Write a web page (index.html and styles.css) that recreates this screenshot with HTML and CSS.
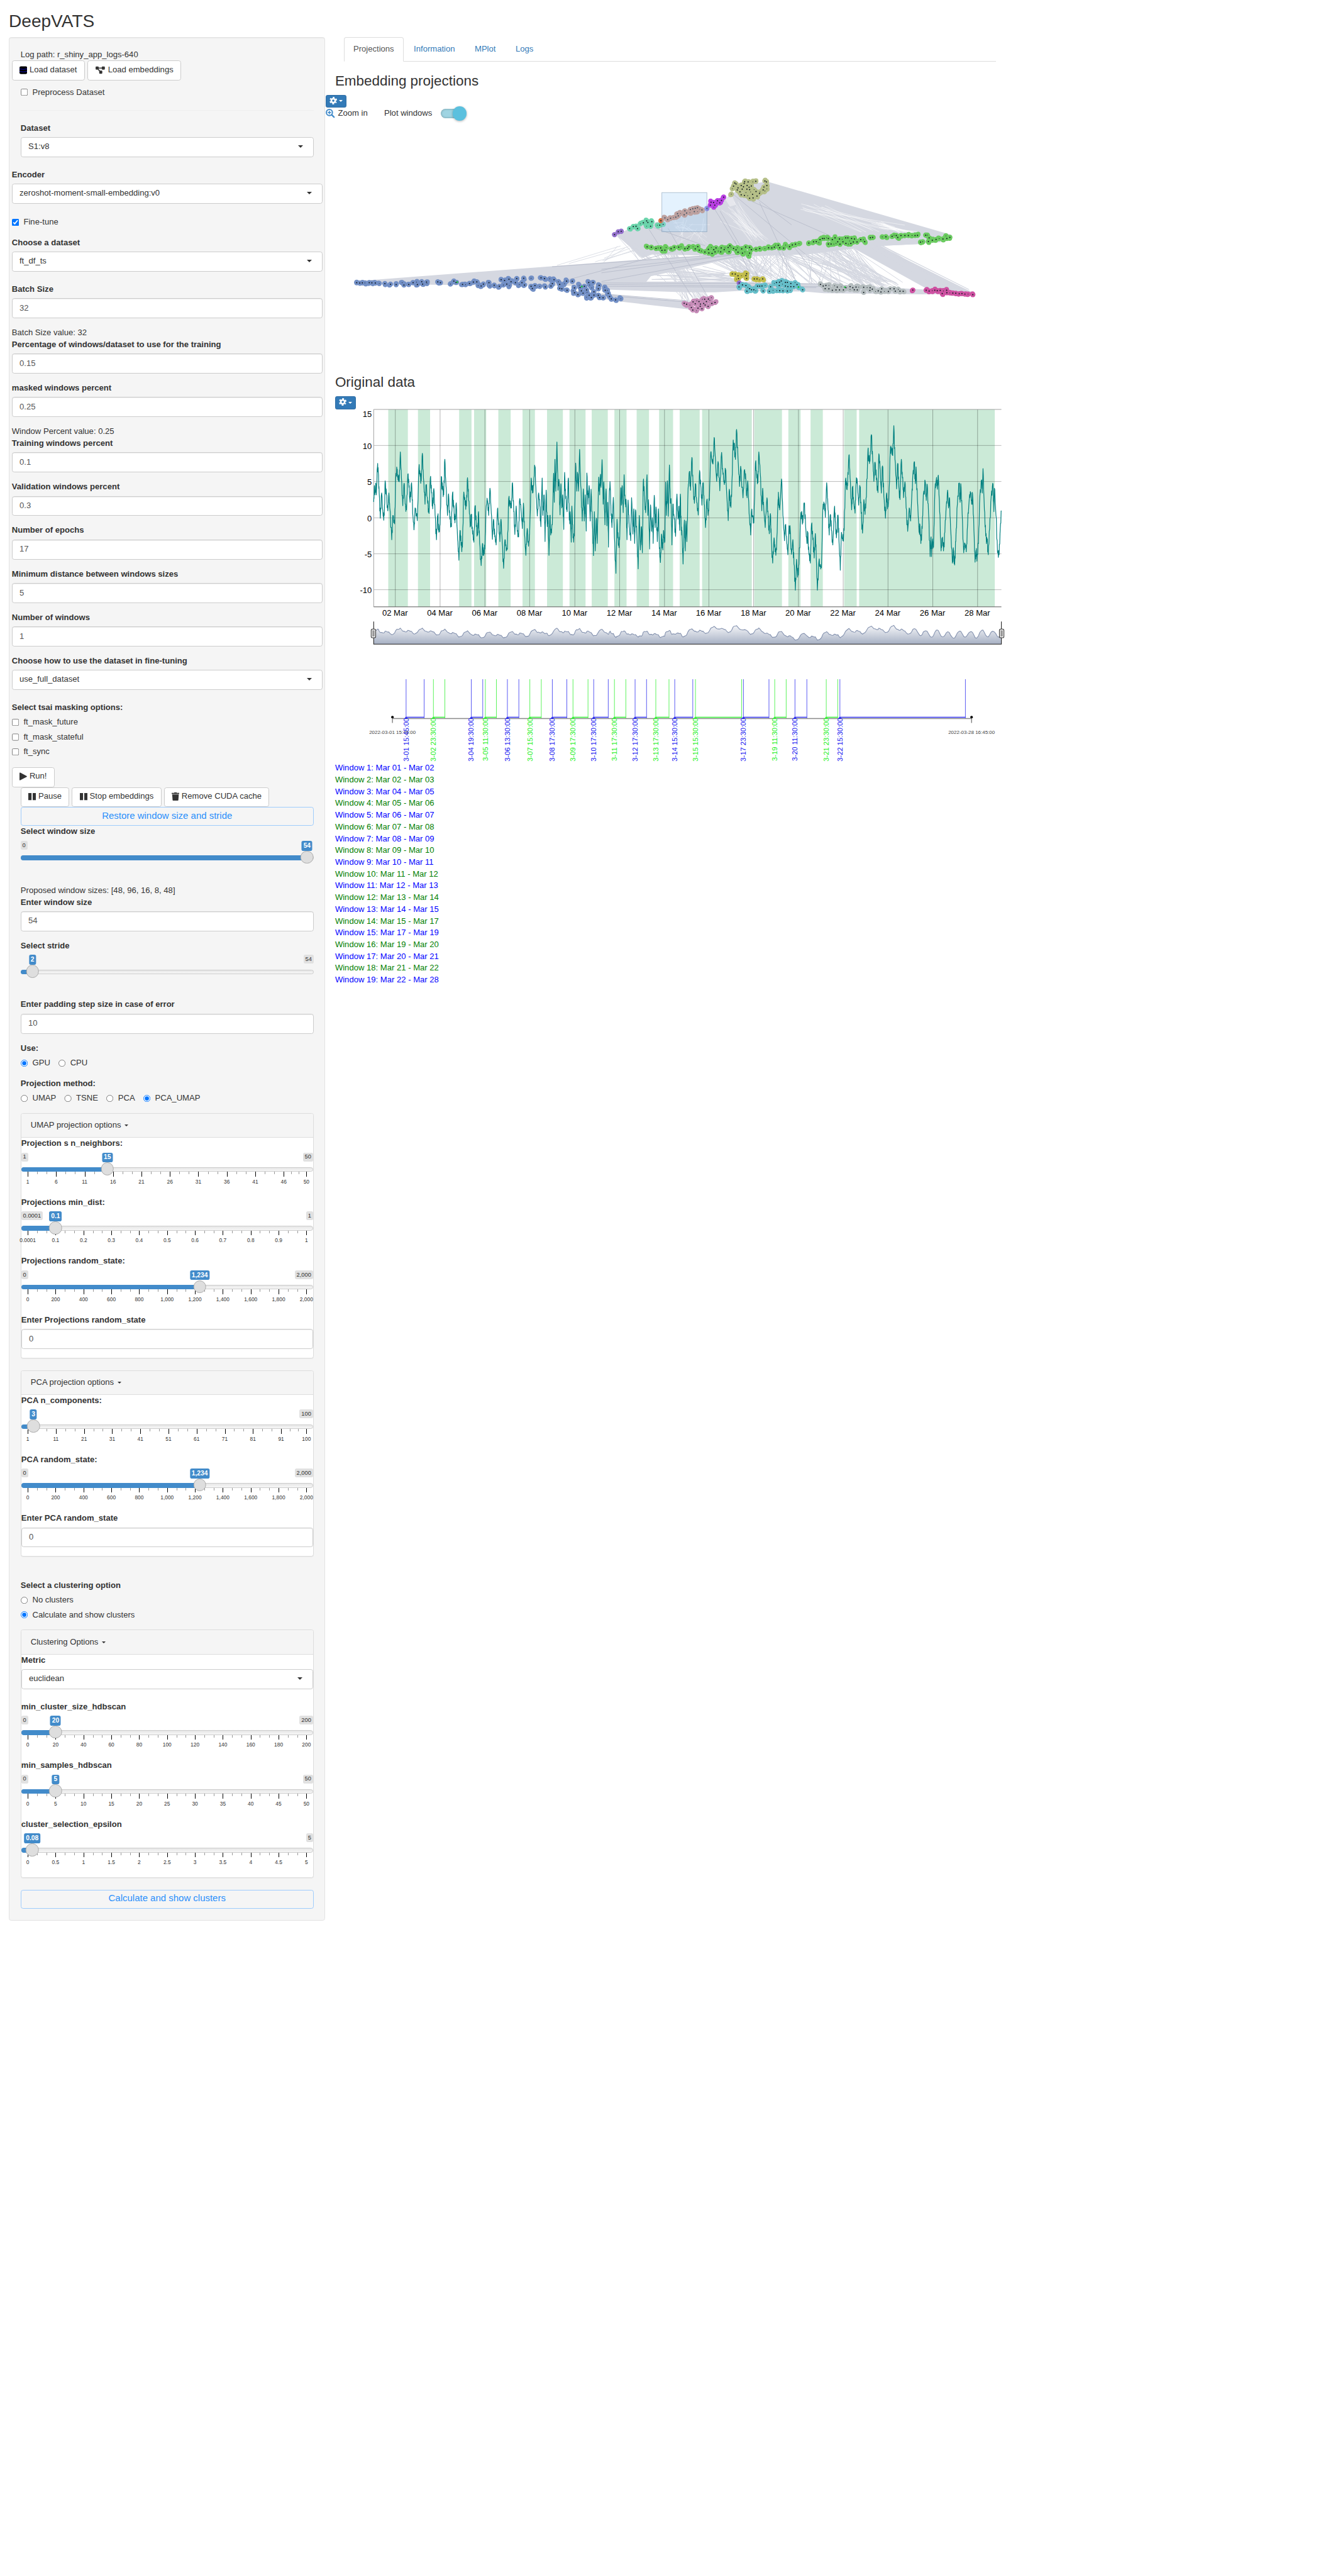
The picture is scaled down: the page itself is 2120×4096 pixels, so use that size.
FILE: index.html
```html
<!DOCTYPE html>
<html lang="en">
<head>
<meta charset="utf-8">
<title>DeepVATS</title>
<link rel="stylesheet" href="styles.css">
</head>
<body>
<h2>DeepVATS</h2>
<div class="layout">
<form class="well">
  <div class="line">Log path: r_shiny_app_logs-640</div>
  <div class="row btns">
    <button type="button" class="btn"><svg class="i13" viewBox="0 0 14 14"><rect y="0" width="14" height="14" rx="2.5" fill="#000"/><path d="M0 4.6q7 2 14 0M0 9.2q7 2 14 0" stroke="#1010e0" stroke-width=".9" fill="none"/></svg>Load dataset</button>
    <button type="button" class="btn"><svg class="i18" viewBox="0 0 576 512"><path fill="#333" d="M0 80C0 53.500 21.500 32 48 32l96 0c26.500 0 48 21.500 48 48l0 16 192 0 0-16c0-26.500 21.500-48 48-48l96 0c26.500 0 48 21.500 48 48l0 96c0 26.500-21.500 48-48 48l-96 0c-26.500 0-48-21.500-48-48l0-16-192 0 0 16c0 1.700-.1 3.400-.3 5L272 288l96 0c26.500 0 48 21.500 48 48l0 96c0 26.500-21.500 48-48 48l-96 0c-26.500 0-48-21.500-48-48l0-96c0-1.700 .1-3.400 .3-5L144 224l-96 0c-26.500 0-48-21.500-48-48L0 80z"/></svg>Load embeddings</button>
  </div>
  <label class="check pre"><input type="checkbox">Preprocess Dataset</label>
  <hr>
  <div class="group sel"><b>Dataset</b><div class="select">S1:v8</div></div>
  <div class="row">
    <div class="group sel"><b>Encoder</b><div class="select">zeroshot-moment-small-embedding:v0</div></div>
    <label class="check fine"><input type="checkbox" checked>Fine-tune</label>
    <div class="group sel"><b>Choose a dataset</b><div class="select">ft_df_ts</div></div>
    <div class="group"><b>Batch Size</b><input class="control" value="32"></div>
    <div class="line">Batch Size value: 32</div>
    <div class="group"><b>Percentage of windows/dataset to use for the training</b><input class="control" value="0.15"></div>
    <div class="group"><b>masked windows percent</b><input class="control" value="0.25"></div>
    <div class="line">Window Percent value: 0.25</div>
    <div class="group"><b>Training windows percent</b><input class="control" value="0.1"></div>
    <div class="group"><b>Validation windows percent</b><input class="control" value="0.3"></div>
    <div class="group"><b>Number of epochs</b><input class="control" value="17"></div>
    <div class="group"><b>Minimum distance between windows sizes</b><input class="control" value="5"></div>
    <div class="group"><b>Number of windows</b><input class="control" value="1"></div>
    <div class="group sel"><b>Choose how to use the dataset in fine-tuning</b><div class="select">use_full_dataset</div></div>
    <div class="group masks"><b>Select tsai masking options:</b>
      <label class="check"><input type="checkbox">ft_mask_future</label>
      <label class="check"><input type="checkbox">ft_mask_stateful</label>
      <label class="check"><input type="checkbox">ft_sync</label>
    </div>
    <div class="btns"><button type="button" class="btn"><svg class="i13" viewBox="0 0 13 14"><path d="M0 1.500Q0 0 1.400 .6L12.300 6.300Q13.200 7 12.300 7.700L1.400 13.400Q0 14 0 12.500z" fill="#333"/></svg>Run!</button></div>
  </div>
  <div class="btns">
    <button type="button" class="btn"><svg class="i13" viewBox="0 0 13 14"><path d="M0 1h5.500v12H0zM7.500 1H13v12H7.500z" fill="#333"/></svg>Pause</button>
    <button type="button" class="btn"><svg class="i13" viewBox="0 0 13 14"><path d="M0 1h5.500v12H0zM7.500 1H13v12H7.500z" fill="#333"/></svg>Stop embeddings</button>
    <button type="button" class="btn"><svg class="i13" viewBox="0 0 13 14"><path d="M0 .9h4L4.600 0h3.800L9 .9h4v1.700H0zM.9 3.500h11.200l-.7 9.300q-.1 1.200-1.300 1.200H2.900q-1.200 0-1.300-1.200z" fill="#333"/></svg>Remove CUDA cache</button>
  </div>
  <button type="button" class="btn-outline">Restore window size and stride</button>
  <div class="group"><b>Select window size</b><div class="irs" data-min="0" data-value="54" data-pos="1"></div></div>
  <div class="line after-slider">Proposed window sizes: [48, 96, 16, 8, 48]</div>
  <div class="group"><b>Enter window size</b><input class="control" value="54"></div>
  <div class="group"><b>Select stride</b><div class="irs" data-max="54" data-value="2" data-pos="0.0189"></div></div>
  <div class="group after-slider"><b>Enter padding step size in case of error</b><input class="control" value="10"></div>
  <div class="group"><b>Use:</b><div class="inline">
    <label class="check"><input type="radio" name="use" checked>GPU</label>
    <label class="check"><input type="radio" name="use">CPU</label></div></div>
  <div class="group"><b>Projection method:</b><div class="inline">
    <label class="check"><input type="radio" name="pm">UMAP</label>
    <label class="check"><input type="radio" name="pm">TSNE</label>
    <label class="check"><input type="radio" name="pm">PCA</label>
    <label class="check"><input type="radio" name="pm" checked>PCA_UMAP</label></div></div>
  <div class="panel">
    <div class="head">UMAP projection options <i class="caret"></i></div>
    <div class="group"><b>Projection s n_neighbors:</b><div class="irs" data-min="1" data-max="50" data-value="15" data-pos="0.2857" data-step="0.10204" data-grid="1 6 11 16 21 26 31 36 41 46 50"></div></div>
    <div class="group"><b>Projections min_dist:</b><div class="irs" data-min="0.0001" data-max="1" data-value="0.1" data-pos="0.1" data-step="0.1" data-grid="0.0001 0.1 0.2 0.3 0.4 0.5 0.6 0.7 0.8 0.9 1"></div></div>
    <div class="group"><b>Projections random_state:</b><div class="irs" data-min="0" data-max="2,000" data-value="1,234" data-pos="0.617" data-step="0.1" data-grid="0 200 400 600 800 1,000 1,200 1,400 1,600 1,800 2,000"></div></div>
    <div class="group"><b>Enter Projections random_state</b><input class="control" value="0"></div>
  </div>
  <div class="panel">
    <div class="head">PCA projection options <i class="caret"></i></div>
    <div class="group"><b>PCA n_components:</b><div class="irs" data-max="100" data-value="3" data-pos="0.0202" data-step="0.10101" data-grid="1 11 21 31 41 51 61 71 81 91 100"></div></div>
    <div class="group"><b>PCA random_state:</b><div class="irs" data-min="0" data-max="2,000" data-value="1,234" data-pos="0.617" data-step="0.1" data-grid="0 200 400 600 800 1,000 1,200 1,400 1,600 1,800 2,000"></div></div>
    <div class="group"><b>Enter PCA random_state</b><input class="control" value="0"></div>
  </div>
  <div class="group cluster"><b>Select a clustering option</b>
    <label class="check"><input type="radio" name="cl">No clusters</label>
    <label class="check"><input type="radio" name="cl" checked>Calculate and show clusters</label>
  </div>
  <div class="panel">
    <div class="head">Clustering Options <i class="caret"></i></div>
    <div class="group sel"><b>Metric</b><div class="select">euclidean</div></div>
    <div class="group"><b>min_cluster_size_hdbscan</b><div class="irs" data-min="0" data-max="200" data-value="20" data-pos="0.1" data-step="0.1" data-grid="0 20 40 60 80 100 120 140 160 180 200"></div></div>
    <div class="group"><b>min_samples_hdbscan</b><div class="irs" data-min="0" data-max="50" data-value="5" data-pos="0.1" data-step="0.1" data-grid="0 5 10 15 20 25 30 35 40 45 50"></div></div>
    <div class="group"><b>cluster_selection_epsilon</b><div class="irs" data-max="5" data-value="0.08" data-pos="0.016" data-step="0.1" data-grid="0 0.5 1 1.5 2 2.5 3 3.5 4 4.5 5"></div></div>
  </div>
  <button type="button" class="btn-outline">Calculate and show clusters</button>
</form>
<main>
  <nav class="tabs"><a class="active">Projections</a><a>Information</a><a>MPlot</a><a>Logs</a></nav>
  <h3>Embedding projections</h3>
  <div class="pull">
    <button type="button" class="gear"><svg viewBox="0 0 14 14"><circle cx="7" cy="7" r="3.600" fill="none" stroke="#fff" stroke-width="3"/><circle cx="7" cy="7" r="5.900" fill="none" stroke="#fff" stroke-width="2.200" stroke-dasharray="3.090 3.090" stroke-dashoffset="1.545" transform="rotate(30 7 7)"/></svg><i class="caret"></i></button>
    <div class="tools">
      <svg class="mag" viewBox="0 0 16 16"><circle cx="6.500" cy="6.500" r="5.300" fill="none" stroke="#428bca" stroke-width="2.200"/><path d="M10.600 10.600L14.600 14.600" stroke="#428bca" stroke-width="2.600" stroke-linecap="round"/><path d="M6.500 3.700v5.600M3.700 6.500h5.600" stroke="#428bca" stroke-width="1.700"/></svg>
      <span class="zin">Zoom in</span><span class="pw">Plot windows</span><span class="switch"></span>
    </div>
  </div>
  <svg class="scatter" id="scatter" viewBox="641 320 1290 300"></svg>
  <h3 class="second">Original data</h3>
  <button type="button" class="gear"><svg viewBox="0 0 14 14"><circle cx="7" cy="7" r="3.600" fill="none" stroke="#fff" stroke-width="3"/><circle cx="7" cy="7" r="5.900" fill="none" stroke="#fff" stroke-width="2.200" stroke-dasharray="3.090 3.090" stroke-dashoffset="1.545" transform="rotate(30 7 7)"/></svg><i class="caret"></i></button>
  <svg class="series" id="series" viewBox="641 782 1290 460"></svg>
  <svg class="timeline" id="timeline" viewBox="641 1290 1290 168"></svg>
  <div class="windows" id="windows"></div>
</main>
</div>
<script src="app.js"></script>
</body>
</html>
```
FILE: styles.css
```css
* { box-sizing: border-box; }
html { overflow-x: hidden; }
body { margin: 0; zoom: .9357; font: 14px/20px "Liberation Sans", Arial, sans-serif; color: #333; background: #fff; }
h2 { font-size: 30px; line-height: 33px; margin: 0; padding: 20px 0 10px 15px; font-weight: 400; }
h3 { font-size: 24px; line-height: 26px; font-weight: 400; margin: 20px 0 10px; }
.layout { display: flex; align-items: flex-start; }
.well { width: 538px; margin-left: 15px; padding: 19px; background: #f5f5f5; border: 1px solid #e3e3e3; border-radius: 4px; box-shadow: inset 0 1px 1px rgba(0,0,0,.05); flex: none; }
.row { margin: 0 -15px; }
.line { height: 20px; }
.btns { display: flex; gap: 4.500px; }
.btn { height: 34px; padding: 0 12px; border: 1px solid #ccc; border-radius: 4px; background: #fff; font: inherit; color: #333; display: flex; align-items: center; white-space: nowrap; padding-bottom: 2px; }
.btn svg { margin-right: 4px; height: 14px; flex: none; }
.i13 { width: 13px; }
.i18 { width: 18px; }
.btn-outline { display: block; width: 100%; height: 32px; border: 1px solid #9fccfc; border-radius: 4px; background: #f5f5f5; color: #2a8ffb; font: 16px/20px "Liberation Sans", Arial, sans-serif; padding: 0 0 3px; }
.check { display: flex; height: 20px; margin-bottom: 5px; }
.check input { width: 13px; height: 13px; margin: 4px 7px 0 0; flex: none; }
.pre { margin: 10px 0 20px; }
.fine { margin: 22px 0 15px; }
hr { border: 0; border-top: 1px solid #eee; margin: 0 0 20px; }
.group { margin-bottom: 15px; }
.group > b { display: block; height: 20px; margin-bottom: 5px; }
.sel { margin-bottom: 20px; }
.control, .select { display: block; width: 100%; height: 34px; border: 1px solid #ccc; border-radius: 4px; background: #fff; padding: 5px 12px 7px; font: inherit; line-height: 20px; }
.control { color: #555; box-shadow: inset 0 1px 1px rgba(0,0,0,.075); }
.select { display: flex; justify-content: space-between; align-items: center; padding-right: 17px; }
.select::after { content: ""; border: 5px solid transparent; border-top-color: #333; border-bottom: 0; }
.masks { margin-bottom: 16px; }
.inline { display: flex; gap: 14px; }
.inline .check { margin: 0; }
.after-slider { margin-top: 35px; }
.panel { border: 1px solid #ddd; border-radius: 4px; background: #fff; margin-bottom: 20px; box-shadow: 0 1px 1px rgba(0,0,0,.05); display: flow-root; }
.head { height: 41px; padding: 10px 16px; border-bottom: 1px solid #ddd; background: #f5f5f5; border-radius: 3px 3px 0 0; }
.caret { display: inline-block; border: 4px solid transparent; border-top-color: currentColor; border-bottom: 0; vertical-align: middle; margin-left: 2px; }
.cluster { margin-top: 39px; }
.cluster .check:last-child { margin: 0; }

/* range sliders */
.irs { position: relative; height: 40px; font-size: 10px; line-height: 13px; }
.irs.grid { height: 60px; }
.irs-min, .irs-max { position: absolute; top: 0; padding: 1px 3px; background: #e1e1e1; border-radius: 3px; color: #333; }
.irs-min { left: 0; }
.irs-max { right: 0; }
.irs-single { position: absolute; top: 0; padding: 1px 3px; background: #428bca; border-radius: 3px; color: #fff; font-size: 11px; line-height: 15px; font-weight: 700; transform: translateX(-50%); }
.irs-line { position: absolute; top: 25px; left: 0; right: 0; height: 8px; border: 1px solid #ccc; border-radius: 8px; background: linear-gradient(#dedede -50%, #fff 150%); }
.irs-bar { position: absolute; top: 25px; left: 0; height: 8px; background: #428bca; border-radius: 8px 0 0 8px; }
.irs-handle { position: absolute; top: 17px; width: 22px; height: 22px; border: 1px solid #ababab; border-radius: 50%; background: #dedede; transform: translateX(-50%); }
.irs-tick { position: absolute; top: 33px; width: 1px; height: 8px; background: #000; }
.irs-tick.small { height: 4px; background: #999; }
.irs-text { position: absolute; top: 43px; font-size: 9px; transform: translateX(-50%); }

main { width: 1148px; margin-left: 16.500px; }
.tabs { display: flex; margin-left: 15px; width: 1108px; border-bottom: 1px solid #ddd; height: 42px; }
.tabs a { height: 42px; padding: 10px 15px; border: 1px solid transparent; color: #337ab7; margin-right: 1.500px; line-height: 19px; }
.tabs .active { color: #555; border-color: #ddd #ddd #fff; border-radius: 4px 4px 0 0; background: #fff; }
.gear { display: flex; align-items: center; justify-content: center; gap: 3px; width: 35px; height: 22px; padding: 0; border: 1px solid #2e6da4; border-radius: 3px; background: #337ab7; color: #fff; }
.gear svg { width: 13px; height: 13px; margin-top: -2px; }
.gear .caret { margin: 0; }
.pull { margin-left: -15.500px; height: 123.600px; }
.tools { display: flex; align-items: center; height: 20px; }
.mag { width: 15.500px; height: 15.500px; margin-right: 5px; }
.zin { width: 78.500px; }
.pw { width: 96px; }
.switch { position: relative; width: 40px; height: 16px; border-radius: 9px; background: #9fd4e2; box-shadow: inset 0 0 4px rgba(0,0,0,.3); }
.switch::after { content: ""; position: absolute; left: 20px; top: -4px; width: 24px; height: 24px; border-radius: 50%; background: #5bc0de; box-shadow: 0 1px 4px rgba(0,0,0,.3); }
.scatter, .series, .timeline { display: block; width: 1147.200px; overflow: hidden; }
.scatter { height: 266.800px; }
.second { margin-top: 86px; }
.series { height: 409.100px; margin-top: -.5px; }
.timeline { height: 149.400px; margin-top: 42.200px; }
.windows { color: blue; white-space: pre; }
.windows div:nth-child(even) { color: green; }
svg text { font-family: "Liberation Sans", Arial, sans-serif; }
```
FILE: app.js
```js
// ---------- helpers ----------
let seed = 7;
const rnd = () => (seed = (seed * 16807) % 2147483647) / 2147483647;
const pairs = s => s.trim().split(/\s+/).map(p => p.split(',').map(Number));
const tile = (ox, oy, kx, ky) => ([x, y]) => [ox + x / kx, oy + y / ky];
const wide = tile(620, 40, 1.2062, 2.7034);
const near = tile(1150, 320, 2.1189, 3);
const f = n => n.toFixed(1);

// ---------- range sliders ----------
document.querySelectorAll('.irs').forEach(el => {
  const d = el.dataset;
  const at = p => `calc(11px + (100% - 22px) * ${p})`;
  let h = '<span class="irs-line"></span>';
  h += `<span class="irs-bar" style="width:${at(d.pos)}"></span>`;
  if (d.grid) {
    el.classList.add('grid');
    const g = d.grid.split(' ');
    g.forEach((t, i) => {
      const p = Math.min(1, i * d.step), q = Math.min(1, (i + 1) * d.step);
      h += `<span class="irs-tick" style="left:${at(p)}"></span><span class="irs-text" style="left:${at(p)}">${t}</span>`;
      if (i < g.length - 1) for (const k of [1, 2]) h += `<span class="irs-tick small" style="left:${at(p + (q - p) * k / 3)}"></span>`;
    });
  }
  h += `<span class="irs-handle" style="left:${at(d.pos)}"></span>`;
  if (d.min) h += `<span class="irs-min">${d.min}</span>`;
  if (d.max) h += `<span class="irs-max">${d.max}</span>`;
  h += `<span class="irs-single" style="left:${at(d.pos)}">${d.value}</span>`;
  el.innerHTML = h;
});

// ---------- embedding scatter ----------
const C = {
  purple: ['#926fcb', '53,386 68,370 80,367'],
  teal: ['#6bd4ab', '114,352 129,340 146,352 157,324 170,318 188,316 204,312 183,338 199,338 140,338 183,307 226,332 236,332 250,327'],
  orange: ['#c98f7c', '257,290 268,300 280,292 292,288 301,286 311,278 308,266 320,265 335,272 338,250 345,262 358,260 360,242 370,238 376,254 389,254 380,235 389,232 407,244 398,240'],
  dot: ['#8b83e0', '427,236'],
  magenta: ['#b93fe2', '441,217 454,202 459,217 467,206 479,204 486,190 495,171 455,228 470,192 444,200'],
  olive: ['#b5bf88', '545,95 540,90 566,104 530,123 553,118 570,125 594,84 613,83 607,107 598,114 589,125 604,141 561,141 566,158 579,161 592,163 600,178 614,176 626,139 642,141 655,130 658,113 670,104 670,124 668,84 662,78 640,150 526,154 578,92 580,82 625,80 662,136 630,165 535,108 550,130 585,145 612,155 590,104 575,112 618,128 600,128'],
  green: ['#6bcb60', '185,456 202,458 221,465 230,462 240,462 245,476 257,475 262,460 282,467 295,459 313,458 322,455 338,467 349,465 354,456 371,455 380,468 390,455 396,475 405,480 419,486 435,491 448,494 445,460 433,470 455,472 464,462 473,480 460,485 485,462 483,485 500,462 497,472 513,460 517,484 525,458 520,450 535,465 545,473 551,461 553,487 568,468 571,492 581,485 584,457 600,460 607,472 595,505 600,492 626,470 641,466 662,466 677,461 690,462 700,458 705,447 716,447 722,461 738,463 746,446 762,455 773,445 786,441 800,438 840,434 859,427 870,426 880,432 885,415 895,408 902,408 912,404 919,408 919,440 930,440 941,440 935,415 946,405 957,427 950,436 964,411 966,441 978,427 975,412 989,405 998,405 990,436 1000,440 1010,436 1013,408 1025,411 1005,422 1020,428 1035,428 1050,415 1061,415 1066,426 1089,404 1098,402 1137,399 1152,398 1177,396 1194,391 1185,389 1213,391 1229,391 1243,391 1258,391 1280,390 1270,391 1200,402 1320,389 1327,405 1313,389 1292,429 1301,427 1324,425 1340,418 1355,414 1368,409 1383,411 1399,408 1411,402 1395,393'],
  yellow: ['#c2bd4c', '530,611 542,612 553,622 567,622 585,621 588,637 555,638 547,641 588,610 619,640 630,640 640,645 653,640'],
  violet: ['#926fcb', '558,663'],
  cyan: ['#66bec9', '557,686 571,674 585,678 593,688 608,702 589,710 617,702 625,708 632,681 650,680 641,681 663,677 655,709 680,711 685,685 695,705 709,661 721,659 728,652 733,670 745,660 753,660 767,666 784,661 767,684 779,684 755,684 710,707 735,708 722,707 753,709 765,706 815,702 798,686 792,672 700,666 600,696 745,680 720,678'],
  grey: ['#b5bdbf', '887,671 898,680 909,677 921,677 906,696 921,697 935,705 944,679 950,703 955,687 964,703 971,685 980,703 990,690 1007,684 1007,700 1024,702 1018,690 1031,687 1042,687 1036,703 1062,688 1062,717 1076,689 1088,690 1087,706 1097,698 1110,711 1121,708 1132,715 1135,697 1146,711 1162,712 1169,697 1185,697 1202,700 1190,710 1209,710 1222,711'],
  pink: ['#ce52a2', '1261,704 1315,705 1327,709 1340,707 1350,705 1360,707 1372,706 1385,709 1398,705 1380,724 1399,719 1411,720 1423,721 1449,725 1460,724 1485,727 1504,730 1435,722 1472,727'],
  rose: ['#c68cb8', '335,780 345,785 371,772 386,766 364,804 380,782 391,808 385,822 401,784 414,781 407,811 409,757 418,756 433,755 447,781 439,763 460,775 432,798 370,818 445,748 425,770 395,770 400,797 358,790 420,790']
};
const blue = pairs('75,1353 82,1355 88,1354 94,1354 104,1353 110,1354 118,1355 127,1357 140,1358 153,1361 166,1363 180,1353 184,1365 195,1362 205,1353 213,1350 225,1348 227,1360 236,1350 237,1357 215,1363 262,1349 268,1353 291,1360 299,1345 304,1352 319,1362 326,1363 335,1357 344,1350 352,1349 355,1368 362,1370 367,1360 380,1353 382,1370 392,1366 404,1372 408,1338 413,1365 416,1342 421,1360 426,1335 427,1368 431,1348 441,1353 444,1332 450,1363 456,1353 460,1330 462,1365 477,1330 477,1372 480,1383 486,1368 497,1372 500,1328 510,1375 508,1332 520,1333 523,1370 526,1358 530,1338 540,1348 543,1382 543,1362 548,1385 554,1358 559,1345 560,1392 572,1346 574,1395 577,1405 577,1380 585,1415 588,1367 593,1395 597,1407 600,1372 606,1402 605,1390 610,1352 620,1352 617,1380 611,1418 622,1417 616,1430 605,1428 632,1418 634,1367 632,1385 647,1376 648,1392 643,1431 655,1408 653,1393 658,1425 662,1437 672,1442 684,1436 635,1430 590,1378 622,1400 612,1365');
let s = '';
const poly = (pts, fill = '#d5d8e1') => s += `<polygon points="${pts.map(p => p.map(f)).join(' ')}" fill="${fill}"/>`;
const seg = (a, b, c = '#d5d8e1', w = 1.2) => s += `<path d="M${a.map(f)}L${b.map(f)}" stroke="${c}" stroke-width="${w}"/>`;
const nseg = (a, b, c, w) => seg(near(a), near(b), c, w);
poly(pairs('60,386 115,352 204,320 407,255 490,195 530,150 600,95 672,82 1418,388 1412,415 1290,440 1100,452 830,500 600,510 205,500 165,520').map(near));
poly([...pairs('75,1345 585,1258').map(wide), ...pairs('150,530 600,490 830,455 1290,420 1400,425 1290,440 1030,458 700,490 500,530 410,560 200,625 180,660 0,680').map(near), ...pairs('300,1365 75,1358').map(wide)]);
poly([...pairs('600,1350').map(wide), ...pairs('0,655 540,655 900,668 1300,700 1500,725 1300,728 900,722 820,712 560,708 460,716 340,716 0,700').map(near)]);
poly([...pairs('560,1390 660,1445').map(wide), ...pairs('340,812 380,820 350,768 0,725').map(near)]);
poly(pairs('1010,455 1130,450 1225,522 1510,722 1400,708 1310,690').map(near));
const fan = (n, x1, x2, y1, y2, X1, X2, Y1, Y2, c, w) => {
  for (let i = 0; i < n; i++) nseg([x1 + rnd() * (x2 - x1), y1 + rnd() * (y2 - y1)], [X1 + rnd() * (X2 - X1), Y1 + rnd() * (Y2 - Y1)], c, w);
};
// sparse areas between edges
fan(26, 480, 560, 190, 320, 600, 680, 380, 440, '#fff', .5);
fan(12, 800, 920, 210, 250, 1050, 1250, 330, 375, '#fff', .6);
fan(10, 1080, 1150, 310, 350, 1180, 1290, 365, 385, '#fff', .8);
fan(22, 270, 420, 290, 370, 290, 440, 320, 440, '#fff', .4);
poly(pairs('500,180 530,165 545,215 520,225').map(near), '#ffffff66');
// edges
fan(26, 120, 300, 400, 520, 320, 440, 740, 800);
fan(9, 60, 100, 390, 410, 150, 230, 510, 560);
fan(7, 60, 200, 450, 465, -180, 60, 520, 570, '#d5d8e1', 1);
fan(34, 380, 560, 480, 520, 520, 660, 600, 650);
fan(24, 200, 420, 560, 660, 490, 560, 600, 660);
fan(48, 500, 760, 480, 500, 600, 800, 620, 690);
fan(60, 650, 960, 440, 480, 840, 1180, 650, 690);
fan(30, 850, 1020, 440, 460, 1050, 1240, 650, 695);
fan(9, 1080, 1140, 440, 460, 1380, 1500, 690, 715);
const dark = '#b6bbc9';
[[530,150,980,680],[480,250,640,640],[640,200,790,660],[600,190,930,395],[630,180,770,330],[190,350,370,750],[270,350,430,740],[210,345,420,450],[450,220,545,440],[540,420,600,610],[700,440,780,640],[770,440,890,650]].forEach(l => nseg([l[0], l[1]], [l[2], l[3]], dark, 1));
[[0,585,600,490],[0,605,560,497],[0,655,590,500],[-150,650,300,480],[-200,570,520,497],[0,663,900,668],[0,672,880,684],[0,682,870,690],[0,725,350,765],[0,733,340,772]].forEach(l => nseg([l[0], l[1]], [l[2], l[3]], dark, 1));
const groups = [[blue.map(wide), '#728fc5'], ...Object.values(C).map(([c, p]) => [pairs(p).map(near), c])];
groups.push([[near([241, 306])], '#d9703f']);
groups.forEach(([pts, c]) => {
  pts.forEach(([x, y]) => {
    s += `<circle cx="${f(x)}" cy="${f(y)}" r="5" fill="${c}"/>`;
    if (pts.length > 5) s += `<circle cx="${f(x + (rnd() - .5) * 4)}" cy="${f(y + (rnd() - .5) * 5)}" r="4.600" fill="${c}"/>`;
  });
  pts.forEach(([x, y], i) => s += `<circle cx="${f(x)}" cy="${f(y)}" r="${i % 4 == 3 ? .7 : 1.2}" fill="#101820"/>`);
});
[wide([307, 1350]), wide([594, 1373]), near([798, 687]), near([986, 687])].forEach(([x, y]) => s += `<circle cx="${f(x)}" cy="${f(y)}" r="1.700" fill="#1fc43c"/>`);
s += '<rect x="1265.500" y="368.300" width="86" height="75" fill="#9fd2fb" fill-opacity=".28" stroke="#6f8eaa" stroke-opacity=".6" stroke-width="1"/>';
document.getElementById('scatter').innerHTML = s;

// ---------- time series ----------
const left = tile(620, 700, 2.3758, 2.8), right = tile(1260, 700, 2.3059, 2.8);
const part1 = pairs(`225,728 228,640 231,690 235,630 237,690 242,541 246,570 250,680 255,815 261,680 268,805 273,800 277,615 283,690 289,775 294,680 298,760 307,930 312,800 320,845 325,600 331,560 335,610 341,620 346,460 351,600 357,748 363,628 368,740 374,770 380,580 385,650 390,730 397,625 402,790 408,877 413,760 423,828 430,552 436,590 441,615 446,468 451,600 458,740 463,635 470,735 476,790 482,600 488,680 493,765 498,656 504,800 510,930 516,800 521,890 526,850 532,592 538,665 543,690 548,500 553,640 560,800 565,685 571,820 578,860 583,680 588,760 594,840 600,733 606,930 612,1040 617,880 622,960 628,970 634,675 640,745 646,750 651,598 656,720 663,862 668,795 674,900 680,943 685,750 691,860 697,905 701,780 706,950 713,1068 719,950 724,1015 730,980 736,750 741,720 747,800 753,655 759,790 764,928 769,820 775,915 781,958 787,765 792,850 798,940 803,820 809,950 815,1083 821,930 827,990 832,980 838,710 844,740 850,760 855,625 861,780 866,902 872,750 877,885 883,915 888,710 894,770 900,870 905,735 910,900 916,1014 922,870 928,965 933,900 940,600 946,680 951,640 957,537 963,700 968,803 974,680 979,750 984,860 990,600 993,800 999,690 1003,940 1008,665 1013,860 1016,800 1021,1014 1025,800 1029,905 1036,850 1042,575 1045,730 1048,500 1052,670 1057,407 1062,665 1067,620 1071,797 1075,630 1079,760 1083,690 1088,875 1092,570 1097,710 1103,780 1109,600 1113,825 1118,800 1122,943 1125,750 1130,920 1136,910 1142,520 1147,670 1151,575 1155,670 1160,447 1165,640 1172,830 1177,658 1181,830 1185,690 1190,884 1193,573 1198,740 1203,640 1208,830 1212,660 1218,850 1223,1015 1227,780 1231,990 1236,815 1240,950 1247,595 1251,690 1255,580 1257,650 1262,502 1267,740 1270,620 1275,850 1280,658 1284,855 1288,730 1291,970 1295,670 1299,645 1303,800 1307,865 1313,704 1318,920 1325,1110 1330,820 1336,960 1342,930 1347,655 1350,745 1353,640 1358,785 1362,582 1367,740 1372,740 1375,930 1380,718 1385,860 1392,935 1396,705 1402,900 1406,765 1410,950 1414,770 1420,910 1426,1086 1431,800 1436,985 1441,860 1445,1000 1449,620 1454,690 1460,785 1466,582 1470,800 1473,716 1478,980 1482,744 1487,885 1491,825 1494,950 1499,693 1503,865 1507,755 1513,940 1518,765 1522,978 1527,1052 1532,900 1538,985 1541,880 1546,945`);
const part2 = pairs(`26,940 29,622 33,800 37,615 41,805 46,530 50,735 53,710 57,958 61,740 67,820 73,912 79,686 84,820 88,750 91,880 94,686 98,880 102,910 106,1060 112,825 116,990 119,830 123,940 128,660 134,565 139,665 145,490 150,640 156,735 161,630 166,730 173,798 179,560 184,640 189,745 194,625 199,740 205,865 211,717 216,800 222,720 228,462 234,515 238,525 243,383 248,490 254,618 260,512 268,668 276,463 282,580 288,635 293,553 299,700 305,828 310,660 314,750 320,700 326,430 331,415 337,500 342,340 348,490 355,645 360,537 370,706 377,555 383,620 388,705 391,615 397,790 404,905 408,773 413,810 418,840 425,520 431,600 436,625 440,460 446,570 453,775 457,655 462,770 468,865 476,706 481,810 486,898 491,790 495,930 501,1055 507,920 512,995 518,985 524,740 527,697 532,770 540,605 546,800 553,935 557,850 563,950 568,1010 573,855 579,890 584,1008 590,930 595,1060 601,1200 606,1035 611,1130 617,1060 624,820 630,800 634,840 640,733 646,860 652,950 655,890 661,1010 667,1055 672,850 678,930 684,1028 689,897 693,1020 698,1200 705,1045 710,1075 716,1080 722,770 728,740 733,810 739,625 745,770 750,905 755,795 760,880 766,958 773,762 777,830 782,920 789,798 793,930 799,1093 804,890 810,935 816,880 822,610 827,660 831,640 837,478 842,600 849,770 853,650 858,730 864,788 869,625 873,607 880,745 886,645 891,790 897,895 903,715 908,795 914,700 921,447 925,510 930,510 936,368 942,510 947,618 952,515 958,610 965,678 969,470 974,545 980,680 985,535 991,700 998,815 1003,680 1007,765 1013,715 1019,460 1024,440 1030,480 1035,320 1040,500 1047,658 1052,522 1057,650 1062,715 1068,500 1073,600 1078,705 1084,620 1089,760 1096,885 1103,760 1109,830 1114,700 1119,580 1125,513 1130,630 1133,540 1139,720 1146,890 1150,850 1154,950 1160,870 1165,690 1174,625 1178,720 1182,635 1188,790 1195,1020 1199,915 1201,1020 1205,935 1210,970 1216,670 1222,610 1227,660 1231,585 1237,780 1243,990 1248,925 1254,990 1260,890 1266,750 1272,665 1276,760 1280,705 1285,870 1293,1055 1298,985 1303,1065 1308,940 1315,740 1323,632 1327,730 1330,630 1336,790 1343,1000 1348,950 1354,995 1360,850 1367,720 1374,685 1378,740 1382,685 1388,880 1393,1050 1398,990 1401,1045 1408,950 1414,700 1422,610 1425,680 1428,550 1434,770 1440,910 1446,940 1451,1010 1457,870 1464,700 1471,628 1476,780 1478,655 1485,800 1492,1000 1499,1010 1504,870 1509,778`);
const key = [...part1.map(left), ...part2.map(right)];
const line = [];
key.forEach((p, i) => {
  line.push(p);
  const q = key[i + 1];
  if (!q) return;
  const gap = q[0] - p[0];
  if (gap > 1.2) [.25, .5, .75].forEach((k, j) => line.push([p[0] + gap * k, p[1] + (q[1] - p[1]) * k + (j % 2 ? 1 : -1) * rnd() * 12]));
});
s = '<defs><linearGradient id="rg" x1="0" y1="0" x2="0" y2="1"><stop offset="0" stop-color="#f4f5f8"/><stop offset="1" stop-color="#a7b1c4"/></linearGradient></defs>';
const L = 714.7, R = 1914.4, T = 783.2, B = 1160.4;
const bands = [...[[291,380],[426,481],[613,669],[681,736],[791,847],[901,957],[1012,1084],[1114,1187],[1215,1288],[1318,1373],[1419,1475]].map(b => b.map(x => left([x, 0])[0])), [left([1521, 0])[0], right([62, 0])[0]], ...[[91,179],[190,409],[420,542],[570,624],[668,722],[816,871],[882,1480]].map(b => b.map(x => right([x, 0])[0]))];
bands.forEach(([a, b]) => s += `<rect x="${f(a)}" y="${T}" width="${f(b - a)}" height="${B - T}" fill="#cbead7"/>`);
[['15', 257], ['10', 429, 426], ['5', 622, 618.5], ['0', 816, 813], ['-5', 1009, 1005.5], ['-10', 1199, 1197.5]].forEach(([t, y, g]) => {
  s += `<text x="711" y="${f(700 + y / 2.8 + 5.6)}" font-size="15.700" text-anchor="end" fill="#000">${t}</text>`;
  if (g) s += `<path d="M${L} ${f(700 + g / 2.8)}H${R}" stroke="#000" stroke-opacity=".27" stroke-width="1.200"/>`;
});
for (let i = 0; i < 14; i++) {
  const x = 756 + i * 85.61 + (i == 5 || i == 6 || i == 4 ? .8 : 0);
  s += `<path d="M${f(x)} ${T}V${B}" stroke="#000" stroke-opacity=".3" stroke-width="1.200"/>`;
  s += `<text x="${f(x - .5)}" y="1177.600" font-size="15.700" text-anchor="middle" fill="#000">${String(2 + i * 2).padStart(2, '0')} Mar</text>`;
}
s += `<path d="M${L} ${B}V${T}H${R}" fill="none" stroke="#999" stroke-width="1.100"/><path d="M${L} ${B}H${R}" stroke="#555" stroke-width="1.200"/>`;
s += `<path d="M${line.map(p => p.map(f)).join('L')}" fill="none" stroke="#008080" stroke-width="1.450" stroke-linejoin="round"/>`;
const mini = key.map((p, i) => {
  const a = key[Math.max(0, i - 1)][1], b = key[Math.min(key.length - 1, i + 1)][1];
  const v = p[1] * .5 + (a + b) * .25;
  return [p[0], 1212 + (v - 990) * .11];
});
s += `<path d="M${L} 1231.500L${mini.map(p => p.map(f)).join('L')}L${R} 1231.500Z" fill="url(#rg)"/>`;
s += `<path d="M${mini.map(p => p.map(f)).join('L')}" fill="none" stroke="#8391ae" stroke-width="1.300"/>`;
s += `<path d="M${L} 1188.600V1231.800H${R}V1188.600" fill="none" stroke="#222" stroke-width="1.300"/>`;
[714.2, 1914.9].forEach(x => s += `<rect x="${x - 4.3}" y="1203" width="8.600" height="16.500" rx="2.500" fill="#fff" stroke="#333" stroke-width="1.300"/><rect x="${x - 1.8}" y="1205.800" width="3.600" height="11" fill="#999" stroke="#666" stroke-width=".5"/>`);
document.getElementById('series').innerHTML = s;

// ---------- window timeline ----------
const wins = [[186,227,'01 15:45'],[248,274,'02 23:30'],[334,360,'04 19:30'],[366,391,'05 11:30'],[416,442,'06 13:30'],[467,493,'07 15:30'],[518,551,'08 17:30'],[565,599,'09 17:30'],[612,645,'10 17:30'],[659,685,'11 17:30'],[706,732,'12 17:30'],[753,783,'13 17:30'],[796,837,'14 15:30'],[843,948,'15 15:30'],[952,1010,'17 23:30'],[1023,1049,'19 11:30'],[1069,1096,'20 11:30'],[1140,1166,'21 23:30'],[1171,1456,'22 15:30']];
const tx = x => 620 + x / 1.1879;
s = `<path d="M${tx(155)} 1374.700H${tx(1470)}M${tx(155)} 1372V1383M${tx(1470)} 1372V1383" stroke="#888" stroke-width="1.800" fill="none"/>`;
[155, 1470].forEach((x, i) => s += `<circle cx="${tx(x)}" cy="1372" r="2.500"/><text x="${tx(x)}" y="1404.300" font-size="9.600" fill="#444" text-anchor="middle">${i ? '2022-03-28 16:45:00' : '2022-03-01 15:45:00'}</text>`);
wins.forEach(([a, b, t], i) => {
  const c = i % 2 ? '#3cf03c' : '#3a3af0', x = f(tx(a)), e = f(tx(b));
  s += `<path d="M${x} 1299.600V1374M${e} 1299.600V1374" stroke="${c}" stroke-width="1"/><path d="M${x} 1372.300H${e}" stroke="${c}" stroke-width="1.800"/>`;
  s += `<circle cx="${x}" cy="1373.500" r="2.200" fill="${c}"/><text transform="translate(${+x + 4.7} 1373.500) rotate(-90)" text-anchor="end" font-size="13.500" fill="${i % 2 ? '#20f020' : '#1010f0'}">3-${t}:00</text>`;
});
document.getElementById('timeline').innerHTML = s;

const spans = ['01 02','02 03','04 05','05 06','06 07','07 08','08 09','09 10','10 11','11 12','12 13','13 14','14 15','15 17','17 19','19 20','20 21','21 22','22 28'];
document.getElementById('windows').innerHTML = spans.map((p, i) => { const [a, b] = p.split(' '); return `<div>Window ${i + 1}: Mar ${a} - Mar ${b}</div>`; }).join('');
```
